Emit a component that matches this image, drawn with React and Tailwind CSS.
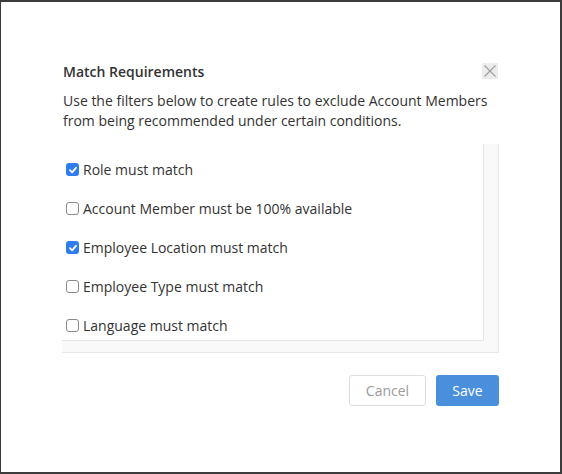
import React from "react";

const items = [
  { label: "Role must match", checked: true },
  { label: "Account Member must be 100% available", checked: false },
  { label: "Employee Location must match", checked: true },
  { label: "Employee Type must match", checked: false },
  { label: "Language must match", checked: false },
];

function Box({ checked }) {
  if (checked) {
    return (
      <span className="w-[13px] h-[13px] rounded-[3px] bg-[#2f7cf0] flex items-center justify-center shrink-0">
        <svg width="10" height="10" viewBox="0 0 10 10">
          <path d="M2 5.2 L4.1 7.3 L8 2.8" fill="none" stroke="#fff" strokeWidth="1.8" strokeLinecap="round" strokeLinejoin="round" />
        </svg>
      </span>
    );
  }
  return <span className="w-[13px] h-[13px] rounded-[3px] border border-[#8a8a8a] bg-white shrink-0" />;
}

export default function App() {
  return (
    <div
      className="w-[562px] h-[474px] box-border border-t-2 border-l border-r-2 border-b-2 border-[#3c3c3c] bg-white text-[#333]"
      style={{ fontFamily: '"Open Sans", "Liberation Sans", sans-serif' }}
    >
      <div className="ml-[62px] w-[436px] pt-[60px]">
        <div className="flex items-center justify-between h-[20px]">
          <div className="text-[14px] leading-[20px] font-semibold text-[#333]">Match Requirements</div>
          <div className="w-[16px] h-[16px] bg-[#ececec] flex items-center justify-center -mt-[2px] mr-[1px]">
            <svg width="16" height="16" viewBox="0 0 16 16">
              <path d="M2.5 2.5 L13.5 13.5 M13.5 2.5 L2.5 13.5" stroke="#a0a0a0" strokeWidth="1.2" />
            </svg>
          </div>
        </div>
        <p className="mt-[9px] text-[14px] leading-[20px] text-[#333]">
          Use the filters below to create rules to exclude Account Members from being recommended under certain conditions.
        </p>
        <div className="mt-[13px] -ml-[1px] w-[437px] h-[209px] bg-[#f9f9f9] border-r border-b border-[#e8e8e8] box-border">
          <div className="w-[422px] h-[197px] bg-white border-r border-b border-[#e4e4e4] box-border overflow-hidden pt-[6px]">
            {items.map((it) => (
              <div key={it.label} className="h-[39px] flex items-center pl-[4px] gap-[4px]">
                <Box checked={it.checked} />
                <span className="text-[14px] leading-[20px] text-[#333]">{it.label}</span>
              </div>
            ))}
          </div>
        </div>
        <div className="mt-[22px] flex justify-end gap-[10px]">
          <button className="w-[77px] h-[31px] rounded-[3px] border border-[#dedede] bg-white text-[14px] text-[#9a9a9a]">
            Cancel
          </button>
          <button className="w-[63px] h-[31px] rounded-[3px] bg-[#4a8fdb] text-[14px] text-white">
            Save
          </button>
        </div>
      </div>
    </div>
  );
}
